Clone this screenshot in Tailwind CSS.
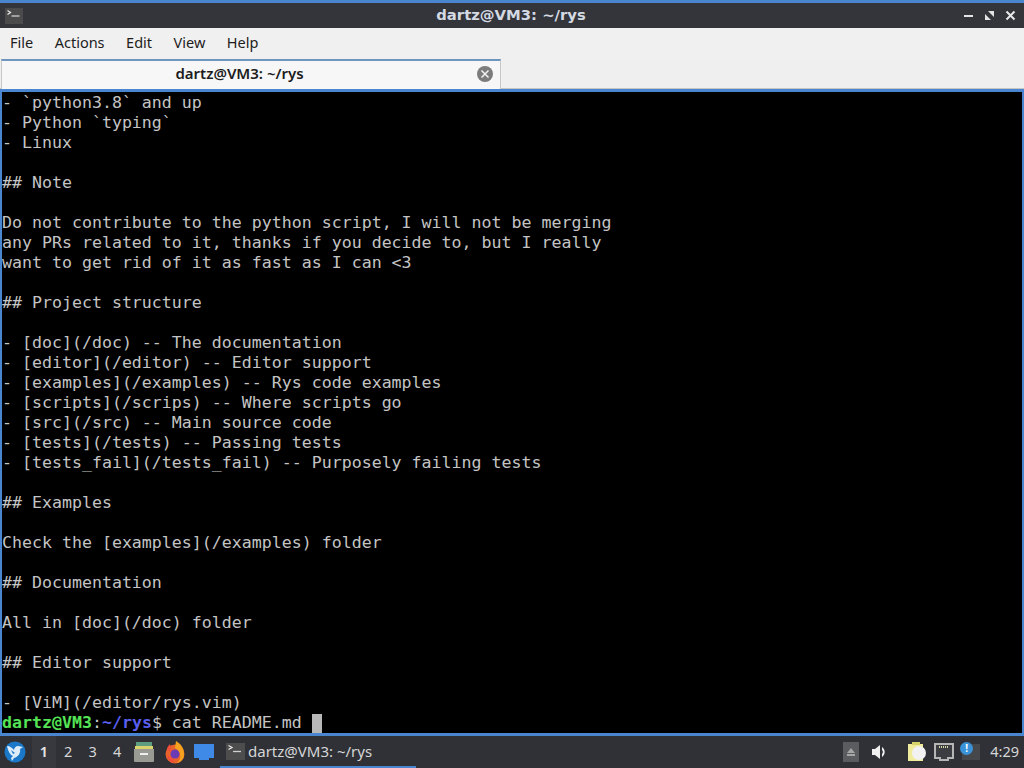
<!DOCTYPE html>
<html lang="en">
<head>
  <meta charset="UTF-8">
  <title>dartz@VM3: ~/rys</title>
  <script src="https://cdn.jsdelivr.net/npm/@tailwindcss/browser@4"></script>
</head>
<body class="w-[1024px] h-[768px] overflow-hidden flex flex-col bg-[#2f3136] font-['Noto_Sans',sans-serif]">
  <!-- title bar -->
  <div class="h-[28px] shrink-0 border-t-[3px] border-[#4a86cf] bg-[#33353a] flex items-center pl-[5px] pr-[8px]">
    <div class="w-[18px] h-[16px] bg-[#4b4b4b]">
      <svg width="18" height="16" viewBox="0 0 18 16"><path d="M2.500 2.500l3 2-3 2" stroke="#e8e8e8" stroke-width="1.300" fill="none"/><path d="M6.500 8h8" stroke="#d0d0d0" stroke-width="1.300"/></svg>
    </div>
    <div class="flex-1 text-center text-[#d3dae3] text-[14.800px] font-bold font-['DejaVu_Sans',sans-serif] pl-[36px]">dartz@VM3: ~/rys</div>
    <div class="flex items-center gap-[10px]">
      <svg width="11" height="11" viewBox="0 0 11 11"><path d="M1 6h9" stroke="#e4e4e4" stroke-width="2"/></svg>
      <svg width="11" height="11" viewBox="0 0 11 11" fill="#e4e4e4"><path d="M4 1h6v6zM1 4v6h6z"/></svg>
      <svg width="11" height="11" viewBox="0 0 11 11"><path d="M1.500 1.500l8 8M9.500 1.500l-8 8" stroke="#e8e8e8" stroke-width="2"/></svg>
    </div>
  </div>

  <!-- menu bar -->
  <div class="h-[30px] shrink-0 bg-[#f0f0f0] flex items-center pl-[10px] gap-[21.500px] text-[14.500px] text-[#1c1c1c]">
    <span>File</span>
    <span>Actions</span>
    <span>Edit</span>
    <span>View</span>
    <span>Help</span>
  </div>

  <!-- tab bar -->
  <div class="h-[34px] shrink-0 bg-[#efefef] border-b-[3px] border-[#4a86cf]">
    <div class="h-[30px] mt-px flex border-b border-[#c4c4c4]">
      <div class="ml-[1px] w-[500px] h-[30px] bg-[#f7f7f7] border-t-[2px] border-x border-t-[#6e95bd] border-x-[#c8c8c8] flex items-center pb-[3px]">
        <span class="flex-1 text-center text-[15px] font-semibold text-[#1c1c1c]">dartz@VM3: ~/rys</span>
        <div class="mr-[7px] w-[16px] h-[16px] rounded-full bg-[#7c7c7c] flex items-center justify-center">
          <svg width="10" height="10" viewBox="0 0 10 10"><path d="M1.500 1.500l7 7M8.500 1.500l-7 7" stroke="#f2f2f2" stroke-width="1.500"/></svg>
        </div>
      </div>
    </div>
  </div>

  <!-- terminal -->
  <div class="h-[644px] shrink-0 bg-black border-x-[2px] border-b-[3px] border-[#4a86cf] pt-px text-[#c4c4c4] text-[16.600px] leading-[20px] font-['DejaVu_Sans_Mono',monospace] overflow-hidden flex flex-col">
    <div class="h-[20px] whitespace-pre">- `python3.8` and up</div>
    <div class="h-[20px] whitespace-pre">- Python `typing`</div>
    <div class="h-[20px] whitespace-pre">- Linux</div>
    <div class="h-[20px]"></div>
    <div class="h-[20px] whitespace-pre">## Note</div>
    <div class="h-[20px]"></div>
    <div class="h-[20px] whitespace-pre">Do not contribute to the python script, I will not be merging</div>
    <div class="h-[20px] whitespace-pre">any PRs related to it, thanks if you decide to, but I really</div>
    <div class="h-[20px] whitespace-pre">want to get rid of it as fast as I can &lt;3</div>
    <div class="h-[20px]"></div>
    <div class="h-[20px] whitespace-pre">## Project structure</div>
    <div class="h-[20px]"></div>
    <div class="h-[20px] whitespace-pre">- [doc](/doc) -- The documentation</div>
    <div class="h-[20px] whitespace-pre">- [editor](/editor) -- Editor support</div>
    <div class="h-[20px] whitespace-pre">- [examples](/examples) -- Rys code examples</div>
    <div class="h-[20px] whitespace-pre">- [scripts](/scrips) -- Where scripts go</div>
    <div class="h-[20px] whitespace-pre">- [src](/src) -- Main source code</div>
    <div class="h-[20px] whitespace-pre">- [tests](/tests) -- Passing tests</div>
    <div class="h-[20px] whitespace-pre">- [tests_fail](/tests_fail) -- Purposely failing tests</div>
    <div class="h-[20px]"></div>
    <div class="h-[20px] whitespace-pre">## Examples</div>
    <div class="h-[20px]"></div>
    <div class="h-[20px] whitespace-pre">Check the [examples](/examples) folder</div>
    <div class="h-[20px]"></div>
    <div class="h-[20px] whitespace-pre">## Documentation</div>
    <div class="h-[20px]"></div>
    <div class="h-[20px] whitespace-pre">All in [doc](/doc) folder</div>
    <div class="h-[20px]"></div>
    <div class="h-[20px] whitespace-pre">## Editor support</div>
    <div class="h-[20px]"></div>
    <div class="h-[20px] whitespace-pre">- [ViM](/editor/rys.vim)</div>
    <div class="h-[20px] whitespace-pre flex items-center"><span class="font-bold text-[#55e455]">dartz@VM3</span><span>:</span><span class="font-bold text-[#5a5ff0]">~/rys</span><span>$ cat README.md </span><span class="w-[10px] h-[19px] bg-[#b8b8b8]"></span></div>
  </div>

  <!-- taskbar -->
  <div class="flex-1 bg-[#2f3136] flex items-center text-[#d6d6d6]">
    <div class="w-[32px] pl-[4px]">
      <svg class="block" width="22" height="24" viewBox="0 0 22 24">
        <circle cx="11" cy="12" r="10.500" fill="#1b78c8"/>
        <path d="M3 6c3 0 5 2 7 4 0-2 2-4 4-4l5 1-3 2c1 4-2 8-6 9l-2 3-1-3 2-2c-3-1-5-5-6-10z" fill="#dcecf8"/>
        <path d="M7 10l4 3-2 1z" fill="#1b78c8"/>
      </svg>
    </div>
    <div class="w-[24px] h-full bg-[#37393e] flex items-center justify-center text-[14.500px] font-semibold text-[#e8e8e8]">1</div>
    <div class="w-[24.500px] text-center text-[14.500px]">2</div>
    <div class="w-[24.500px] text-center text-[14.500px]">3</div>
    <div class="w-[24.500px] text-center text-[14.500px]">4</div>
    <div class="ml-[3.500px] w-[22px]">
      <svg class="block" width="22" height="22" viewBox="0 0 22 22">
        <path d="M3 1h16v5H3z" fill="#5e9e80"/>
        <path d="M2 5h18v3H2z" fill="#d8d36a"/>
        <path d="M1 8h20v12a1 1 0 0 1-1 1H2a1 1 0 0 1-1-1z" fill="#9a9a94"/>
        <path d="M7 12h8v2H7z" fill="#f0f0f0"/>
      </svg>
    </div>
    <div class="ml-[10px] w-[20px]">
      <svg class="block" width="20" height="24" viewBox="0 0 20 24">
        <circle cx="10" cy="14" r="9.500" fill="#e8632a"/>
        <path d="M11 1c5 3 8 7 8 13 0 5-3 8-7 9 3-3 4-6 3-9-1-3-3-5-5-6z" fill="#f6a21f"/>
        <path d="M5 4C3 6 2 8 2 10l4 2c2-1 3-1 4 1 1 2-1 4-3 4-2 0-4-1-5-3 0 5 3 9 7 9" fill="#f24f3a"/>
        <circle cx="10" cy="14" r="4.500" fill="#6a3bb3"/>
      </svg>
    </div>
    <div class="ml-[9px] w-[20px]">
      <svg class="block" width="20" height="20" viewBox="0 0 20 20"><path d="M0 2h20v14h-5v2H5v-2H0z" fill="#3f8ae6"/></svg>
    </div>
    <div class="ml-[6px] w-[196px] h-full flex items-center border-b-[2px] border-[#4a86cf] pl-[6px] gap-[3px]">
      <div class="w-[19px] h-[17px] bg-[#4d4d4d]">
        <svg class="block" width="19" height="17" viewBox="0 0 19 17"><path d="M2.500 2.500l3.500 2-3.500 2" stroke="#e8e8e8" stroke-width="1.300" fill="none"/><path d="M7 8.500h8" stroke="#d0d0d0" stroke-width="1.300"/></svg>
      </div>
      <span class="text-[15px] text-[#d6d6d6]">dartz@VM3: ~/rys</span>
    </div>
    <div class="flex-1"></div>

    <!-- tray -->
    <div class="w-[16px] h-[20px] bg-[#5a5c60] flex items-center justify-center mr-[12px]">
      <svg width="10" height="10" viewBox="0 0 10 10" fill="#a6a6a6"><path d="M5 1l4 5H1zM1 7h8v2H1z"/></svg>
    </div>
    <svg class="mr-[18px]" width="18" height="18" viewBox="0 0 18 18" fill="#f0f0f0"><path d="M1 6h3l5-4v14l-5-4H1z"/><path d="M11 4a6 6 0 0 1 0 10v-3a3 3 0 0 0 0-4z"/></svg>
    <svg class="mr-[7px]" width="20" height="22" viewBox="0 0 20 22"><path d="M1 3h15v17H1z" fill="#f1ec9c"/><path d="M5 1h8v3H5z" fill="#d8d36a"/><circle cx="12" cy="12" r="7" fill="#f2f2f2"/></svg>
    <svg class="mr-[8px]" width="20" height="18" viewBox="0 0 20 18"><path d="M1 1h18v14h-5v2H6v-2H1z" fill="#3b3d40" stroke="#b5b5b5" stroke-width="2"/><path d="M5 4h10" stroke="#d8d8a8" stroke-width="2" stroke-dasharray="1 1"/></svg>
    <div class="relative w-[18px] h-[16px] mr-[10px] bg-[#45474b]">
      <div class="absolute -left-[2px] -top-[2px] w-[13px] h-[13px] rounded-full bg-[#3a93d8] text-white text-[10px] font-bold leading-[13px] text-center">!</div>
    </div>
    <span class="text-[14.500px] text-[#d6d6d6] mr-[5px]">4:29</span>
  </div>
</body>
</html>
